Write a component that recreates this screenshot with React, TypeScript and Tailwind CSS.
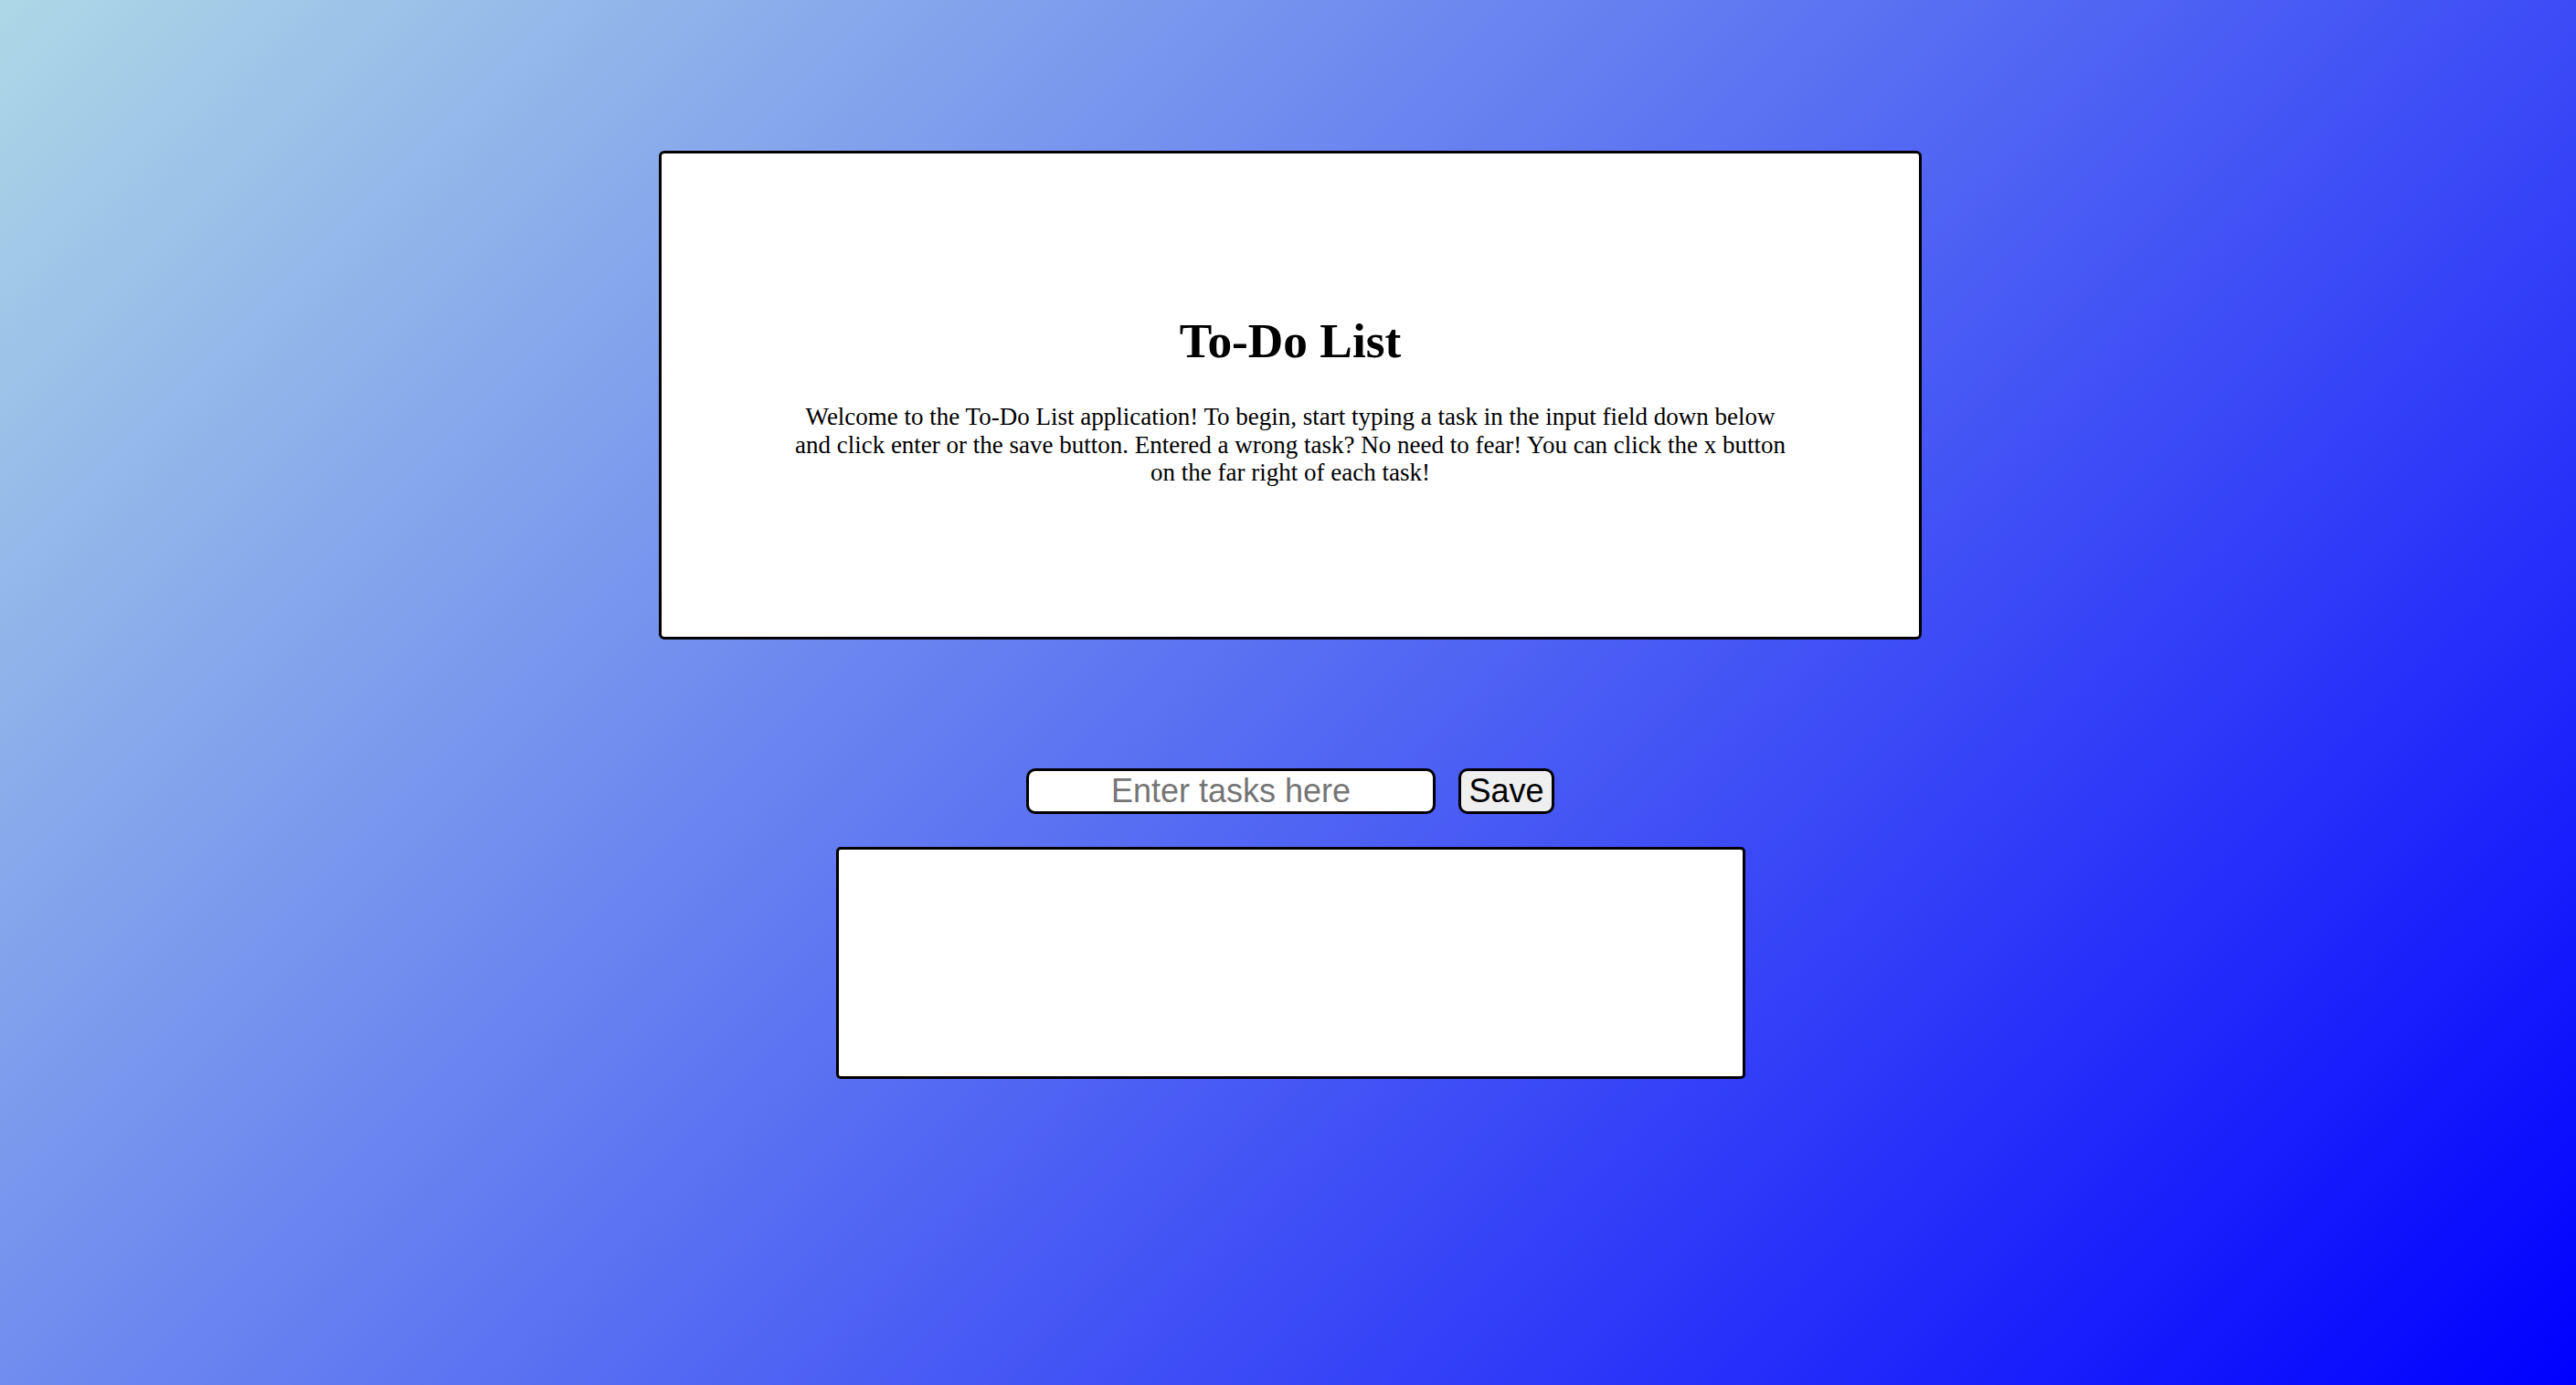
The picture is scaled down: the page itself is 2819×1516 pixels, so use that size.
export default function App() {
  return (
    <div className="min-h-screen w-full bg-[linear-gradient(135deg,#add8e6,#0000ff)] font-['Liberation_Serif',serif] text-black">
      <div className="flex flex-col items-center pl-[5px] pt-[165px]">
        {/* Intro card */}
        <div className="box-border h-[535px] w-[1382px] rounded-[6px] border-[3px] border-black bg-white pt-[175px] text-center">
          <h1 className="text-[53.33px] font-bold leading-[61px]">To-Do List</h1>
          <p className="mx-auto mt-[37px] w-[1090px] text-[27px] leading-[30.6px]">
            Welcome to the To-Do List application! To begin, start typing a task in the input field down below
            and click enter or the save button. Entered a wrong task? No need to fear! You can click the x button
            on the far right of each task!
          </p>
        </div>

        {/* Input row */}
        <div className="mt-[141px] flex w-full justify-center gap-[25px]">
          <input
            type="text"
            placeholder="Enter tasks here"
            className="box-border h-[50px] w-[448px] rounded-[10px] border-[3px] border-black bg-white text-center font-['Liberation_Sans',sans-serif] text-[36px] text-black outline-none placeholder:text-[#757575]"
          />
          <button className="box-border h-[50px] w-[105px] rounded-[10px] border-[3px] border-black bg-[#efefef] px-0 font-['Liberation_Sans',sans-serif] text-[36px] leading-none text-black">
            Save
          </button>
        </div>

        {/* Task list */}
        <div className="mt-[36px] box-border h-[254px] w-[995px] rounded-[5px] border-[3px] border-black bg-white" />
      </div>
    </div>
  );
}
